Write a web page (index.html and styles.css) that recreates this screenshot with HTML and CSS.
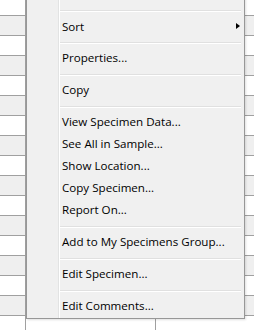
FILE: index.html
```html
<!DOCTYPE html>
<html lang="en">
<head>
  <meta charset="UTF-8" />
  <title>Specimen list</title>
  <link rel="stylesheet" href="styles.css">
</head>
<body>
  <div class="list">
    <div class="row top"><div class="c1"></div><div class="c2"></div><div class="c3"></div></div>
    <div class="row alt"><div class="c1"></div><div class="c2"></div><div class="c3"></div></div>
    <div class="row"><div class="c1"></div><div class="c2"></div><div class="c3"></div></div>
    <div class="row alt"><div class="c1"></div><div class="c2"></div><div class="c3"></div></div>
    <div class="row"><div class="c1"></div><div class="c2"></div><div class="c3"></div></div>
    <div class="row alt"><div class="c1"></div><div class="c2"></div><div class="c3"></div></div>
    <div class="row"><div class="c1"></div><div class="c2"></div><div class="c3"></div></div>
    <div class="row alt"><div class="c1"></div><div class="c2"></div><div class="c3"></div></div>
    <div class="row"><div class="c1"></div><div class="c2"></div><div class="c3"></div></div>
    <div class="row alt"><div class="c1"></div><div class="c2"></div><div class="c3"></div></div>
    <div class="row"><div class="c1"></div><div class="c2"></div><div class="c3"></div></div>
    <div class="row alt"><div class="c1"></div><div class="c2"></div><div class="c3"></div></div>
    <div class="row"><div class="c1"></div><div class="c2"></div><div class="c3"></div></div>
    <div class="row alt"><div class="c1"></div><div class="c2"></div><div class="c3"></div></div>
    <div class="row"><div class="c1"></div><div class="c2"></div><div class="c3"></div></div>
    <div class="row alt"><div class="c1"></div><div class="c2"></div><div class="c3"></div></div>
    <div class="row filler"><div class="c1"></div><div class="c2"></div><div class="c3"></div></div>
  </div>

  <div class="menu">
    <div class="item"></div>
    <div class="sep"></div>
    <div class="item sub">Sort <span class="arrow"></span></div>
    <div class="sep"></div>
    <div class="item">Properties...</div>
    <div class="sep"></div>
    <div class="item">Copy</div>
    <div class="sep"></div>
    <div class="item">View Specimen Data...</div>
    <div class="item">See All in Sample...</div>
    <div class="item">Show Location...</div>
    <div class="item">Copy Specimen...</div>
    <div class="item">Report On...</div>
    <div class="sep"></div>
    <div class="item">Add to My Specimens Group...</div>
    <div class="sep"></div>
    <div class="item">Edit Specimen...</div>
    <div class="sep"></div>
    <div class="item">Edit Comments...</div>
  </div>
</body>
</html>
```

FILE: styles.css
```css
body {
  margin: 0;
  background: #fff;
  font-family: "Open Sans", "Noto Sans", sans-serif;
  font-size: 11.6px;
  color: #000;
  overflow: hidden;
}
.list {
  display: flex;
  flex-direction: column;
  height: 330px;
}
.row {
  display: flex;
  height: 19px;
  border-bottom: 1px solid #a0a0a0;
  background: #fff;
}
.row.top {
  height: 15px;
}
.row.alt {
  background: #efefef;
}
.row.filler {
  flex: 1;
  border-bottom: none;
  background: #fff;
}
.c1 {
  width: 25px;
  border-right: 1px solid #a0a0a0;
}
.c2 {
  width: 129px;
  border-right: 1px solid #a0a0a0;
}
.c3 {
  flex: 1;
}

/* popup menu */
.menu {
  position: absolute;
  left: 26px;
  top: -17px;
  width: 217px;
  border: 1px solid #979797;
  background: linear-gradient(to right, #f0f0f0 31px, #e2e3e3 31px, #e2e3e3 32px, #fff 32px, #fff 33px, #f0f0f0 33px);
  box-shadow: 1px 1px 2px rgba(0, 0, 0, 0.12);
}
.item {
  height: 22px;
  line-height: 20px;
  padding-left: 35px;
  white-space: nowrap;
}
.item.sub {
  display: flex;
  justify-content: space-between;
  align-items: center;
  padding-right: 4px;
}
.arrow {
  width: 0;
  height: 0;
  margin-top: -2px;
  border-top: 3.5px solid transparent;
  border-bottom: 3.5px solid transparent;
  border-left: 4px solid #000;
}
.sep {
  height: 10px;
  margin: 0 3px 0 33px;
  background: linear-gradient(#f0f0f0 4px, #e0e0e0 4px, #e0e0e0 5px, #fff 5px, #fff 6px, #f0f0f0 6px);
}
```
